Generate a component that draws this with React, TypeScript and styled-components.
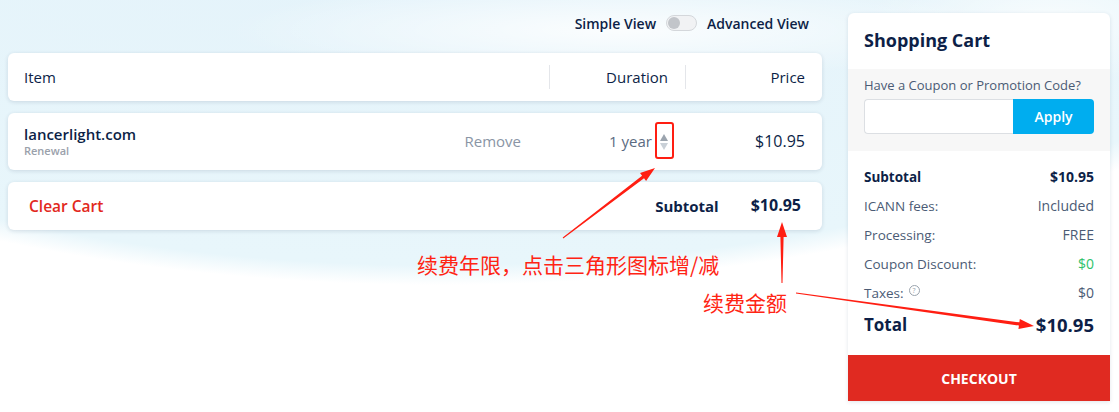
import React from "react";
import styled, { createGlobalStyle } from "styled-components";

const GlobalStyle = createGlobalStyle`
  body {
    margin: 0;
    font-family: "Open Sans", "Noto Sans", "Noto Sans CJK SC", sans-serif;
    color: #0d1f47;
  }
`;

const Page = styled.div`
  position: relative;
  display: flex;
  gap: 26px;
  padding: 13px 9px 0 8px;
  height: 412px;
  box-sizing: border-box;
  overflow: hidden;
  background:
    radial-gradient(ellipse 560px 70px at 620px 30px, rgba(255, 255, 255, 0.85), rgba(255, 255, 255, 0) 70%),
    radial-gradient(ellipse 260px 90px at 1050px 20px, rgba(255, 255, 255, 0.7), rgba(255, 255, 255, 0) 70%),
    radial-gradient(ellipse 960px 395px at 440px -110px, #e3f2fa 0%, #e8f6fb 95%, rgba(255, 255, 255, 0) 100%),
    #ffffff;
`;

const LeftColumn = styled.div`
  width: 814px;
  display: flex;
  flex-direction: column;
`;

const ViewSwitch = styled.div`
  display: flex;
  justify-content: flex-end;
  align-items: center;
  gap: 10px;
  height: 20px;
  padding-right: 13px;
  margin-bottom: 20px;
  font-size: 14px;
  font-weight: 600;
  color: #0d1f47;
`;

const Toggle = styled.span`
  position: relative;
  width: 29px;
  height: 14px;
  border-radius: 8px;
  border: 1px solid #d4d7db;
  background: #f1f2f4;

  &::after {
    content: "";
    position: absolute;
    left: 1px;
    top: 1px;
    width: 12px;
    height: 12px;
    border-radius: 50%;
    background: #c2c5ca;
  }
`;

const Card = styled.div<{ $height: number }>`
  height: ${(p) => p.$height}px;
  background: #fff;
  border-radius: 6px;
  box-shadow: 0 1px 4px rgba(20, 40, 80, 0.14);
  margin-bottom: 12px;
  display: grid;
  grid-template-columns: 1fr 136px 137px;
  align-items: center;
`;

const Col = styled.div<{ $align?: string; $divider?: boolean }>`
  display: flex;
  align-items: center;
  justify-content: ${(p) => p.$align || "flex-start"};
  height: 24px;
  padding: 0 17px 0 16px;
  border-left: ${(p) => (p.$divider ? "1px solid #e4e6ea" : "none")};
  font-size: 15px;
  color: #0d1f47;
`;

const ItemCol = styled.div`
  display: flex;
  align-items: center;
  justify-content: space-between;
  padding: 0 28px 0 16px;
`;

const Domain = styled.div`
  display: flex;
  flex-direction: column;
  margin-top: -2px;
`;

const DomainName = styled.span`
  font-size: 15px;
  font-weight: 600;
  color: #0d1f47;
  line-height: 20px;
`;

const DomainType = styled.span`
  font-size: 11px;
  font-weight: 600;
  color: #9aa1ab;
  line-height: 14px;
`;

const Remove = styled.span`
  font-size: 15px;
  color: #8a95a5;
  margin-bottom: 2px;
`;

const Duration = styled.span`
  font-size: 15px;
  color: #5b6b82;
  margin-bottom: 2px;
`;

const Stepper = styled.span`
  display: inline-flex;
  flex-direction: column;
  gap: 2px;
  margin-left: 8px;
`;

const Tri = styled.span<{ $down?: boolean }>`
  width: 0;
  height: 0;
  border-left: 4px solid transparent;
  border-right: 4px solid transparent;
  ${(p) =>
    p.$down
      ? "border-top: 7px solid #c9d0d7;"
      : "border-bottom: 7px solid #9ba4ae;"}
`;

const Price = styled.span<{ $bold?: boolean }>`
  font-size: 16px;
  font-weight: ${(p) => (p.$bold ? 700 : 400)};
  color: #0d1f47;
  margin-bottom: 2px;
`;

const FooterCard = styled.div`
  height: 48px;
  background: #fff;
  border-radius: 6px;
  box-shadow: 0 1px 4px rgba(20, 40, 80, 0.14);
  display: flex;
  align-items: center;
  padding: 0 21px;
  gap: 32px;
`;

const ClearCart = styled.span`
  flex: 1;
  color: #e2291d;
  font-size: 15.5px;
  font-weight: 600;
`;

const SubLabel = styled.span`
  font-size: 15px;
  font-weight: 700;
  color: #0d1f47;
`;

const Cart = styled.aside`
  width: 262px;
  height: 388px;
  background: #fff;
  border-radius: 6px 6px 0 0;
  box-shadow: 0 1px 4px rgba(20, 40, 80, 0.12);
  display: flex;
  flex-direction: column;
`;

const CartTitle = styled.h2`
  margin: 0;
  height: 56px;
  box-sizing: border-box;
  padding: 0 16px 2px;
  display: flex;
  align-items: center;
  font-size: 18px;
  font-weight: 700;
  color: #0d1f47;
`;

const Coupon = styled.div`
  background: #f7f7f7;
  padding: 7px 16px 17px;
`;

const CouponLabel = styled.div`
  font-size: 13px;
  line-height: 18px;
  color: #4b5b75;
  margin-bottom: 5px;
`;

const CouponForm = styled.div`
  display: flex;
  height: 35px;
`;

const CouponInput = styled.input`
  width: 149px;
  box-sizing: border-box;
  border: 1px solid #dcdfe3;
  border-right: none;
  border-radius: 4px 0 0 4px;
  background: #fff;
  outline: none;
`;

const ApplyButton = styled.button`
  width: 81px;
  border: none;
  border-radius: 0 4px 4px 0;
  background: #00adef;
  color: #fff;
  font-family: inherit;
  font-size: 14px;
  font-weight: 600;
`;

const Summary = styled.div`
  flex: 1;
  padding: 11px 16px 0;
`;

const Row = styled.div<{ $total?: boolean }>`
  display: flex;
  justify-content: space-between;
  align-items: center;
  height: ${(p) => (p.$total ? 34 : 29)}px;
`;

const Label = styled.span<{ $strong?: boolean; $big?: boolean }>`
  display: inline-flex;
  align-items: center;
  gap: 5px;
  font-size: ${(p) => (p.$big ? 17 : 13.5)}px;
  font-weight: ${(p) => (p.$strong ? 700 : 400)};
  color: ${(p) => (p.$strong ? "#0d1f47" : "#4b5b75")};
`;

const Value = styled.span<{ $strong?: boolean; $big?: boolean; $color?: string }>`
  font-size: ${(p) => (p.$big ? 18.5 : 14)}px;
  font-weight: ${(p) => (p.$strong ? 700 : 400)};
  color: ${(p) => p.$color || (p.$strong ? "#0d1f47" : "#4b5b75")};
`;

const HelpIcon = styled.span`
  width: 9px;
  height: 9px;
  border-radius: 50%;
  border: 1px solid #9aa3ad;
  font-size: 7px;
  line-height: 9px;
  text-align: center;
  color: #9aa3ad;
  margin-top: -4px;
`;

const Checkout = styled.button`
  height: 46px;
  border: none;
  background: #e02a21;
  color: #fff;
  font-family: inherit;
  font-size: 14px;
  font-weight: 700;
`;

/* annotation layer drawn over the page */
const Overlay = styled.svg`
  position: absolute;
  left: 0;
  top: 0;
  pointer-events: none;
`;

const Note = styled.span<{ $x: number; $y: number }>`
  position: absolute;
  left: ${(p) => p.$x}px;
  top: ${(p) => p.$y}px;
  font-family: "Noto Sans CJK SC", sans-serif;
  font-size: 21px;
  line-height: 24px;
  color: #ff2414;
  white-space: nowrap;
`;

const arrow = (x1: number, y1: number, x2: number, y2: number) => {
  const dx = x2 - x1;
  const dy = y2 - y1;
  const len = Math.hypot(dx, dy);
  const ux = dx / len;
  const uy = dy / len;
  const nx = -uy;
  const ny = ux;
  const head = 15;
  const bx = x2 - ux * head;
  const by = y2 - uy * head;
  const pts = [
    [x1 + nx * 0.5, y1 + ny * 0.5],
    [bx + nx * 1.6, by + ny * 1.6],
    [bx + nx * 5, by + ny * 5],
    [x2, y2],
    [bx - nx * 5, by - ny * 5],
    [bx - nx * 1.6, by - ny * 1.6],
    [x1 - nx * 0.5, y1 - ny * 0.5],
  ];
  return pts.map((p) => p.join(",")).join(" ");
};

const summaryRows = [
  { label: "ICANN fees:", value: "Included" },
  { label: "Processing:", value: "FREE" },
  { label: "Coupon Discount:", value: "$0", color: "#2fc26b" },
];

export default function App() {
  return (
    <>
      <GlobalStyle />
      <Page>
        <LeftColumn>
          <ViewSwitch>
            <span>Simple View</span>
            <Toggle />
            <span>Advanced View</span>
          </ViewSwitch>

          <Card $height={48}>
            <Col>Item</Col>
            <Col $align="flex-end" $divider>Duration</Col>
            <Col $align="flex-end" $divider>Price</Col>
          </Card>

          <Card $height={57}>
            <ItemCol>
              <Domain>
                <DomainName>lancerlight.com</DomainName>
                <DomainType>Renewal</DomainType>
              </Domain>
              <Remove>Remove</Remove>
            </ItemCol>
            <Col $align="flex-end">
              <Duration>1 year</Duration>
              <Stepper>
                <Tri />
                <Tri $down />
              </Stepper>
            </Col>
            <Col $align="flex-end">
              <Price>$10.95</Price>
            </Col>
          </Card>

          <FooterCard>
            <ClearCart>Clear Cart</ClearCart>
            <SubLabel>Subtotal</SubLabel>
            <Price $bold>$10.95</Price>
          </FooterCard>
        </LeftColumn>

        <Cart>
          <CartTitle>Shopping Cart</CartTitle>
          <Coupon>
            <CouponLabel>Have a Coupon or Promotion Code?</CouponLabel>
            <CouponForm>
              <CouponInput />
              <ApplyButton>Apply</ApplyButton>
            </CouponForm>
          </Coupon>
          <Summary>
            <Row>
              <Label $strong>Subtotal</Label>
              <Value $strong>$10.95</Value>
            </Row>
            {summaryRows.map((r) => (
              <Row key={r.label}>
                <Label>{r.label}</Label>
                <Value $color={r.color}>{r.value}</Value>
              </Row>
            ))}
            <Row>
              <Label>
                Taxes: <HelpIcon>?</HelpIcon>
              </Label>
              <Value>$0</Value>
            </Row>
            <Row $total>
              <Label $strong $big>Total</Label>
              <Value $strong $big>$10.95</Value>
            </Row>
          </Summary>
          <Checkout>CHECKOUT</Checkout>
        </Cart>

        <Overlay width="1119" height="412">
          <rect x="656" y="123" width="17" height="35" rx="2" fill="none" stroke="#ff1e12" strokeWidth="2" />
          <polygon points={arrow(563, 238, 655, 168)} fill="#ff1e12" />
          <polygon points={arrow(782, 283, 782, 222)} fill="#ff1e12" />
          <polygon points={arrow(796, 293, 1034, 326)} fill="#ff1e12" />
        </Overlay>
        <Note $x={417} $y={252}>续费年限，点击三角形图标增/减</Note>
        <Note $x={703} $y={290}>续费金额</Note>
      </Page>
    </>
  );
}
